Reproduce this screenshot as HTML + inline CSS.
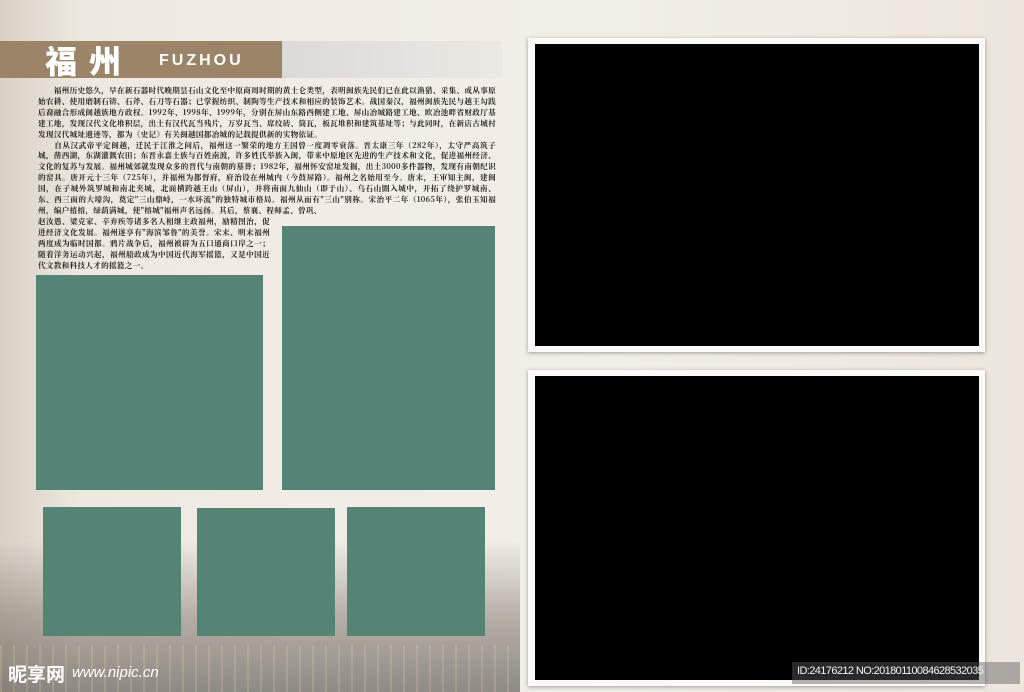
<!DOCTYPE html>
<html><head><meta charset="utf-8"><style>
*{margin:0;padding:0}
body{width:1024px;height:692px;overflow:hidden;position:relative;font-family:"Liberation Sans","Noto Sans CJK SC",sans-serif;
background:linear-gradient(90deg,#d9d1c6 0%,#ede8e0 8%,#f1ede6 30%,#f2eee8 60%,#ece6dd 100%);}
.abs{position:absolute}
.g{position:absolute;background:#558476}
.fr{position:absolute;background:#fbfaf8;box-shadow:0 1px 4px rgba(0,0,0,.35)}
.fr div{position:absolute;left:7px;top:6px;right:6px;bottom:6px;background:#000}
.txt{position:absolute;left:38px;top:86px;width:458px;font-family:"Noto Serif CJK SC","WenQuanYi Zen Hei",serif;font-size:7.6px;line-height:10.9px;color:#2a2520;font-weight:bold;text-align:justify;letter-spacing:.3px}
</style></head><body>
<div class="abs" style="left:0;top:540px;width:520px;height:152px;background:linear-gradient(180deg,rgba(120,110,100,0) 0%,rgba(110,100,90,.45) 50%,rgba(90,85,80,.65) 100%)"></div>
<div class="abs" style="left:0;top:645px;width:520px;height:47px;background:repeating-linear-gradient(90deg,rgba(255,225,160,.18) 0 2px,rgba(0,0,0,0) 2px 13px)"></div>
<div class="abs" style="left:0;top:41px;width:282px;height:37px;background:#9c8469"></div>
<div class="abs" style="left:282px;top:41px;width:220px;height:37px;background:linear-gradient(90deg,#dcdad8,#ece9e4)"></div>
<div class="abs" style="left:45px;top:40px;color:#fff;font-size:32px;font-weight:900;letter-spacing:12px;line-height:40px;font-family:'Noto Sans CJK SC',sans-serif">福州</div>
<div class="abs" style="left:159px;top:52px;color:#fff;font-size:16px;letter-spacing:3px;font-weight:bold">FUZHOU</div>
<div class="txt">　　福州历史悠久，早在新石器时代晚期昙石山文化至中原商周时期的黄土仑类型，表明闽族先民们已在此以渔猎、采集、或从事原始农耕、使用磨制石锛、石斧、石刀等石器；已掌握纺织、制陶等生产技术和相应的装饰艺术。战国秦汉，福州闽族先民与越王勾践后裔融合形成闽越族地方政权。1992年、1998年、1999年，分别在屏山东路西侧建工地、屏山冶城路建工地、欧冶池畔省财政厅基建工地，发现汉代文化堆积层，出土有汉代瓦当残片，万岁瓦当、席纹砖、筒瓦，板瓦堆积和建筑基址等；与此同时，在新店古城村发现汉代城址遗迹等，都为《史记》有关闽越国都冶城的记载提供新的实物依证。<br>　　自从汉武帝平定闽越，迁民于江淮之间后，福州这一繁荣的地方王国曾一度凋零衰落。晋太康三年（282年），太守严高筑子城，凿西湖，东湖灌溉农田；东晋永嘉士族与百姓南渡，许多姓氏举族入闽，带来中原地区先进的生产技术和文化，促进福州经济、文化的复苏与发展。福州城郊就发现众多的晋代与南朝的墓葬；1982年，福州怀安窑址发掘，出土3000多件器物，发现有南朝纪识的窑具。唐开元十三年（725年），并福州为都督府，府治设在州城内（今鼓屏路）。福州之名始用至今。唐末，王审知主闽，建闽国，在子城外筑罗城和南北夹城，北面横跨越王山（屏山），并将南面九仙山（即于山）、乌石山圈入城中，开拓了绕护罗城南、东、西三面的大壕沟，奠定"三山鼎峙，一水环流"的独特城市格局。福州从而有"三山"别称。宋治平二年（1065年），张伯玉知福州，编户植榕，绿荫满城，使"榕城"福州声名远扬。其后，蔡襄、程师孟、曾巩、<br><span style="display:block;width:232px">赵汝愚、梁克家、辛弃疾等诸多名人相继主政福州，励精图治，促进经济文化发展。福州遂享有"海滨邹鲁"的美誉。宋末、明末福州两度成为临时国都。鸦片战争后，福州被辟为五口通商口岸之一；随着洋务运动兴起，福州船政成为中国近代海军摇篮，又是中国近代文教和科技人才的摇篮之一。</span></div>
<div class="g" style="left:36px;top:275px;width:227px;height:215px"></div>
<div class="g" style="left:282px;top:226px;width:213px;height:264px"></div>
<div class="g" style="left:43px;top:507px;width:138px;height:129px"></div>
<div class="g" style="left:197px;top:508px;width:138px;height:128px"></div>
<div class="g" style="left:347px;top:507px;width:138px;height:129px"></div>
<div class="fr" style="left:528px;top:38px;width:457px;height:314px"><div></div></div>
<div class="fr" style="left:528px;top:370px;width:457px;height:316px"><div></div></div>
<div class="abs" style="left:792px;top:662px;width:228px;height:22px;background:rgba(90,90,90,.45)"></div>
<div class="abs" style="left:797px;top:665px;color:#f4f4f4;font-size:11px;letter-spacing:-.6px">ID:24176212 NO:20180110084628532035</div>
<div class="abs" style="left:8px;top:660px;color:#fff;font-size:19px;font-weight:bold;font-family:'Noto Sans CJK SC',sans-serif">昵享网</div>
<div class="abs" style="left:72px;top:664px;color:#fff;font-size:15px;font-style:italic">www.nipic.cn</div>
</body></html>
